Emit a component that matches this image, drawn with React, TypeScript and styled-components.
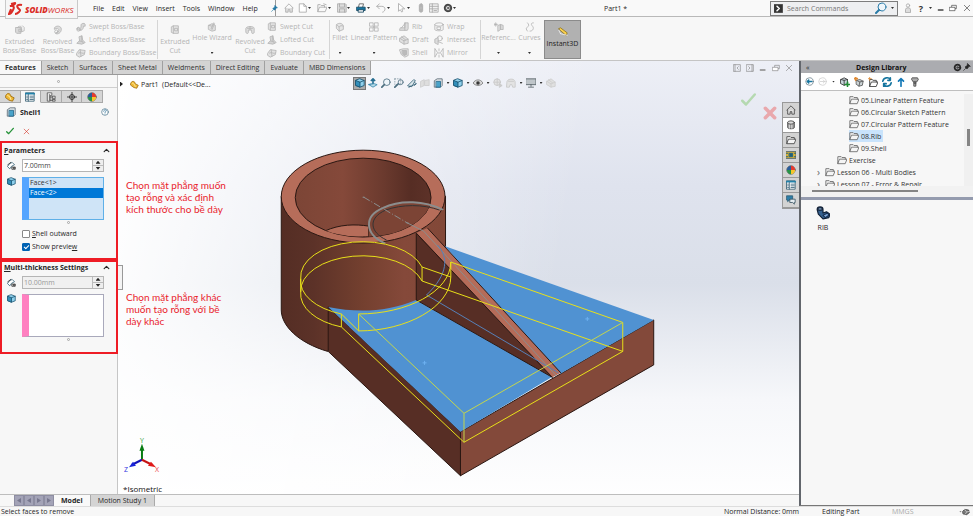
import React from "react";
import styled, { createGlobalStyle, css } from "styled-components";

const Global = createGlobalStyle`
  *, *::before, *::after { box-sizing: border-box; }
  html, body, #root { margin: 0; height: 100%; }
  body {
    font-family: "Open Sans", "Noto Sans", sans-serif;
    font-size: 7px;
    line-height: 9px;
    color: #262626;
    background: #f7f7f7;
    overflow: hidden;
  }
  button, input { font: inherit; color: inherit; margin: 0; padding: 0; border: 0; background: none; }
  ul { list-style: none; margin: 0; padding: 0; }
`;

const Page = styled.div`
  display: flex;
  flex-direction: column;
  min-height: 100vh;
`;

/* ---------- icons ---------- */

const Glyph = styled.svg<{ $size?: number }>`
  display: block;
  flex: none;
  width: ${(p) => p.$size ?? 10}px;
  height: ${(p) => p.$size ?? 10}px;
  fill: none;
  stroke: currentColor;
  stroke-width: 1;
  stroke-linejoin: round;
  stroke-linecap: round;
`;

type IconProps = { name: string; size?: number };

const shapes: Record<string, React.ReactNode> = {
  extrude: <><path d="M1 3h6v7H2L1 9z" fill="#d9d9d9" /><path d="M3 3c0-2 5-2 5 0v5l3-1V3L9 1M5 5h3v3H5z" /></>,
  revolve: <><path d="M2 3c2-3 8-2 8 2s-4 7-7 5l4-3c1-2-2-4-5-2z" fill="#dcdcdc" /><circle cx="4" cy="8" r="2" /></>,
  sweep: <><path d="M1 8c0-2 3-2 3-1s2 1 2-1V4c0-3 5-3 5-1v2H9c0 4-3 6-5 5z" fill="#d9d9d9" /><circle cx="3" cy="9" r="2" /></>,
  loft: <><path d="M4 2l3-1 1 5 3 3-4 2-6-1 3-3z" fill="#d4d4d4" /><path d="M7 1v6l2 3M4 7l3 1" /></>,
  boundary: <><path d="M1 6l3-4 7 1-1 5-6 3-3-2z" fill="#e2e2e2" /><path d="M3 6c3-2 5 2 7 0M5 2l1 8" /></>,
  cut: <><path d="M2 2l2-1h6v9H4L2 9z" fill="#e6e6e6" /><path d="M4 1v9M6 4h3v3H6z" /></>,
  hole: <><path d="M2 4l4-2 4 2v6l-4 1-4-2z" fill="#e0e0e0" /><path d="M8 1L5 8M9 2L6 9M2 4l4 1" /></>,
  revcut: <><path d="M1 4c0-3 10-3 10 0v5c0 1-3 2-3 0V6H4v3c0 2-3 1-3 0z" fill="#e0e0e0" /><path d="M3 4h6M6 2v4" /></>,
  fillet: <><path d="M2 3c3-3 8-1 8 2v4l-5 2-3-3z" fill="#e6e6e6" /><path d="M2 3l3 3v5M5 6c1-2 3-2 5-1" /></>,
  pattern: <><rect x="1" y="1" width="4" height="4" /><rect x="7" y="1" width="4" height="4" /><rect x="1" y="7" width="4" height="4" /><rect x="7" y="7" width="4" height="4" /><path d="M5 5l2 2M7 5L5 7" /></>,
  rib: <><path d="M1 10h9l1-2V1H7v6H2z" fill="#dedede" /><path d="M7 1v9M3 7l4-5" /></>,
  draft: <><path d="M1 4l5-3 5 4v5l-5 1-5-3z" fill="#e0e0e0" /><path d="M1 4l5 3v4M6 7l5-2M3 2l5 4" /></>,
  shell: <><path d="M1 2l4-1h6v8l-4 2-4-3z" fill="#e4e4e4" /><path d="M4 3h5v5l-3 1-2-2z" fill="#bbb" /></>,
  wrap: <><ellipse cx="6" cy="3" rx="5" ry="2" /><path d="M1 3v6c0 2 10 2 10 0V3M4 6h4v3H4z" /></>,
  intersect: <><circle cx="7" cy="4" r="3" /><path d="M1 9V5l4-2v8zM5 8l5 2" fill="#dcdcdc" /></>,
  mirror: <><path d="M1 1v10l3-5zM11 1v10L8 6zM6 1v2M6 5v2M6 9v2" /></>,
  reference: <><path d="M5 4l3-1v6l-3 2zM8 3l3 1v5L8 9z" fill="#ddd" /><path d="M2 1v4M0 3h4M1 2l2 2M3 2L1 4" /></>,
  curves: <path d="M3 1c2 2 2 4 0 5s-2 3 0 5M10 1C7 1 7 3 9 5s1 6-3 6" />,
  instant: <><path d="M1 2l2-1 8 6-1 3z" fill="#ffd34a" stroke="#8d7420" /><path d="M3 8l8 2M1 4l2 4" stroke="#eee" /></>,
  home: <><path d="M1 6l5-5 5 5" /><path d="M2 6v5h3V8h2v3h3V6" fill="#e1e1e1" /></>,
  file: <path d="M2 1h5l3 3v7H2zM7 1v3h3" fill="#fff" />,
  open: <path d="M1 10V2h3l1 1h4v2M1 10l2-5h9l-2 5zM8 1l3 1" />,
  save: <><path d="M1 1h9l1 1v9H1z" fill="#ddd" /><path d="M3 1v4h6V1M3 11V7h6v4" /></>,
  print: <><path d="M3 5l1-4h5l-1 4" fill="#fff" stroke="#555" /><path d="M1 5h10v4H1z" fill="#16759f" stroke="#174964" /><path d="M3 8h6v3H3z" fill="#eee" stroke="#174964" /></>,
  undo: <path d="M4 1L1 4l3 3M1 4h6c5 0 5 6 1 7" />,
  cursor: <path d="M3 1v9l2-2 2 3 1-1-1-3h3z" fill="#fff" />,
  traffic: <><rect x="4" y="1" width="4" height="10" rx="2" fill="#b9b9b9" /><path d="M6 3v1M6 8v1" /></>,
  list: <><rect x="1" y="1" width="10" height="10" fill="#f1f1f1" /><path d="M4 1v10M1 4h10M1 7h10M6 9h3" /></>,
  gear: <><circle cx="6" cy="6" r="4" strokeWidth="2" strokeDasharray="2 1" /><circle cx="6" cy="6" r="3" /><circle cx="6" cy="6" r="1" /></>,
  pin: <path d="M7 1l4 4-2 0-2 3-1 1-3-3 3-2zM4 8l-3 3" fill="currentColor" />,
  search: <><circle cx="7" cy="5" r="4" fill="#eef5fa" /><path d="M4 8l-3 3" strokeWidth="2" /></>,
  command: <><rect width="12" height="12" fill="#343434" stroke="#888" /><path d="M4 3l3 3-3 3" stroke="#fff" strokeWidth="2" /></>,
  user: <><circle cx="6" cy="3" r="2" /><path d="M3 11V8c0-3 6-3 6 0v3z" fill="#ddd" /></>,
  minimise: <path d="M2 9h7" strokeWidth="2" />,
  restore: <><path d="M4 4V2h7v5H9" /><path d="M1 5h8v5H1z" fill="#fff" /></>,
  close: <path d="M2 2l8 8M10 2l-8 8" />,
  paneLeft: <path d="M1 1h10v10H1zM3 1v10M8 4L6 6l2 2" />,
  paneRight: <path d="M1 1h10v10H1zM9 1v10M4 4l2 2-2 2" />,
  check: <path d="M1 7l3 3 7-8" strokeWidth="2" />,
  cube: <><path d="M6 1l5 2v6l-5 2-5-2V3z" fill="#8fd0ec" stroke="#17506d" /><path d="M1 3l5 2v6l-5-2z" fill="#328fba" stroke="#17506d" /><path d="M6 5l5-2" stroke="#17506d" /></>,
  sheetCube: <><path d="M2 3l3-2h6v8l-2 2H2z" fill="#e6e9ea" stroke="#586874" /><path d="M4 4h5v7H4z" fill="#49a3ca" stroke="#24688a" /></>,
  feature: <><path d="M1 4c2-4 6-2 6 1l4 2-2 4-4-1-4-3z" fill="#efb935" stroke="#9c6a0b" /><path d="M3 4l3 2 1 3" stroke="#fff1b0" /></>,
  property: <><path d="M1 1h10v10H1z" fill="#fff" stroke="#315c70" /><path d="M1 2h10" stroke="#2281a9" strokeWidth="2" /><path d="M4 3v8M6 5h4M6 7h4M6 9h4M2 5h1M2 7h1M2 9h1" stroke="#386277" /></>,
  config: <><path d="M2 1h5v3H5v7H2z" fill="#fff" stroke="#555" /><path d="M4 3v7M5 6h3M5 10h3M8 5h3v3H8zM8 9h3v2H8z" stroke="#555" /></>,
  target: <><circle cx="6" cy="6" r="3" /><path d="M6 0v12M0 6h12" /></>,
  appearance: <><circle cx="6" cy="6" r="5" fill="#fff" stroke="#555" /><path d="M6 6V1a5 5 0 015 5z" fill="#e63b2e" stroke="none" /><path d="M6 6h5a5 5 0 01-5 5z" fill="#f5c52b" stroke="none" /><path d="M6 6v5a5 5 0 01-5-5z" fill="#269447" stroke="none" /><path d="M6 6H1a5 5 0 015-5z" fill="#2b5d9a" stroke="none" /></>,
  help: <><circle cx="6" cy="6" r="5" fill="#fff" stroke="#426e87" /><path d="M4 5c0-3 4-3 4-1 0 1-2 1-2 3M6 9h0" stroke="#17608b" /></>,
  depth: <><path d="M1 7l3-4 3-1 3 3-4 2-2 3z" fill="#fff" stroke="#28576d" /><path d="M1 5l4-3M7 8h2v3H7zM10 8h1v3h-1z" stroke="#222" /></>,
  normal: <><path d="M6 1v7M4 3l2-2 2 2" stroke="#286e91" strokeWidth="2" /><path d="M1 8l3-1M8 7l3 1-5 3-5-3z" stroke="#3a89ad" fill="#b9dbe8" /></>,
  zoomArea: <><path d="M1 1h7v7H1z" stroke="#8fa1ac" strokeDasharray="1 2" /><circle cx="8" cy="5" r="3" /><path d="M5 7l-4 4" strokeWidth="2" /></>,
  prev: <><path d="M1 9l7-7 2 1-4 7zM4 10l-2 1 9-4M9 5l2 2-2 2" stroke="#396579" fill="#dbe7ec" /></>,
  section: <path d="M1 4l4-2v7l-4 2zM6 3l5-1v7L6 9z" fill="#dedede" />,
  eye: <><path d="M0 6c3-5 9-5 12 0-3 4-9 4-12 0z" fill="#ddd" /><circle cx="6" cy="6" r="2" fill="#333" /></>,
  ball: <><circle cx="5" cy="5" r="4" fill="#e3e3e3" /><path d="M5 1v8M1 5h8M8 7l3 2-3 2z" fill="#ccc" /></>,
  scene: <path d="M1 5c0-5 10-5 10 0v6H8l-1-3H5l-1 3H1zM3 4h6" fill="#e3e3e3" />,
  monitor: <><path d="M0 1h12v7H0z" fill="#bfc5c9" stroke="#505b62" /><path d="M6 8v2M3 11h6" stroke="#505b62" /></>,
  cylinder: <><path d="M2 3v6c0 2 8 2 8 0V3" fill="#999" stroke="#444" /><ellipse cx="6" cy="3" rx="4" ry="2" fill="#ddd" stroke="#444" /><path d="M4 6v4M7 6v4" stroke="#eee" /></>,
  folder: <path d="M1 10V2h4l1 1h4v2M1 10l2-5h9l-2 5z" fill="#f4f4f4" />,
  view: <><path d="M0 2h12v8H0z" fill="#ddb53a" stroke="#3f5662" /><path d="M4 4h4v4H4zM0 4h2M0 8h2M10 4h2M10 8h2" fill="#1e607d" stroke="#1e607d" /></>,
  chat: <><path d="M1 1h7v5H4L2 8V6H1z" fill="#2e7fa8" stroke="#2e5c74" /><path d="M5 5h6v4h-1v2L8 9H5z" fill="#e5edf1" stroke="#3c5664" /></>,
  back: <><circle cx="6" cy="6" r="5" fill="#fff" stroke="#637a86" /><path d="M9 6H3M5 4L3 6l2 2" stroke="#16759f" strokeWidth="2" /></>,
  forward: <><circle cx="6" cy="6" r="5" /><path d="M3 6h6M7 4l2 2-2 2" /></>,
  addLib: <><path d="M1 3l4-2 4 2v5l-4 2-4-2z" fill="#c8d5db" stroke="#333" /><path d="M1 3l4 1v6M5 4l4-1" stroke="#333" /><path d="M9 6v5M6 9h6" stroke="#238b35" strokeWidth="2" /></>,
  box: <><path d="M3 4l4-1 4 2-1 5-4 1-3-2z" fill="#cbd3d6" stroke="#555" /><path d="M3 4l4 2 4-1M7 6l-1 5" stroke="#555" /><path d="M2 0v4M0 2h4" stroke="#df8a35" strokeWidth="2" /></>,
  newFolder: <><path d="M2 11V3h3l1 1h4v2M2 11l2-5h8l-2 5z" fill="#fff" stroke="#333" /><path d="M2 0v4M0 2h4" stroke="#df8a35" /></>,
  refresh: <><path d="M1 5c1-5 7-5 9-2V1M10 1v3H7M11 7c-1 5-7 5-9 2v2M2 11V8h3" stroke="#16759f" strokeWidth="2" /></>,
  up: <path d="M6 11V2M3 5l3-3 3 3" stroke="#1479b8" strokeWidth="2" />,
  bolt: <path d="M3 1h6l1 2-2 3H4L2 3zM5 6h2v5H5zM5 8h2" fill="#aaa" stroke="#444" />,
  ribPart: <><path d="M1 3c0-3 5-3 5 0v3l3-1 3 2-1 3-5 1-4-4z" fill="#35618f" stroke="#101f35" /><ellipse cx="3.5" cy="2.5" rx="2" ry="1" fill="#93b4d9" stroke="#101f35" /><path d="M6 8l4-2 1 2-3 2z" fill="#82aadd" stroke="#173152" /></>,
  globe: <><path d="M1 5l3-3 6 1 1 4-4 3-5-1z" fill="#777" stroke="#333" /><path d="M4 2l3 4 4-1M7 6l-2 3" stroke="#ddd" /></>,
};

const Icon = ({ name, size }: IconProps) => (
  <Glyph viewBox="0 0 12 12" $size={size} aria-hidden="true">{shapes[name]}</Glyph>
);

const IconButton = styled.button<{ $w?: number; $tone?: string }>`
  display: flex;
  align-items: center;
  justify-content: center;
  flex: none;
  width: ${(p) => p.$w ?? 13}px;
  color: ${(p) => p.$tone ?? "#a8a8a8"};
`;

const Caret = styled.span<{ $dark?: boolean }>`
  flex: none;
  width: 3px;
  height: 2px;
  background: ${(p) => (p.$dark ? "#333" : "#8c8c8c")};
  clip-path: polygon(0 0, 100% 0, 50% 100%);
`;

/* ---------- title bar ---------- */

const TitleBar = styled.header`
  display: flex;
  align-items: center;
  height: 17px;
  border-bottom: 1px solid #b9b9b9;
  background: #f9f9f9;
`;

const Brand = styled.div`
  position: relative;
  z-index: 1;
  display: flex;
  align-items: center;
  gap: 2px;
  align-self: flex-start;
  flex: none;
  width: 73px;
  height: 19px;
  margin-left: 5px;
  padding: 0 2px;
  border: 1px solid #c9c9c9;
  border-top: 0;
  background: #f6f6f6;
  color: #da2c26;
  font-size: 8px;
  font-style: italic;
  b { font-weight: 800; }
`;

const BrandMark = styled.svg`
  width: 15px;
  height: 14px;
  fill: none;
  stroke: currentColor;
  stroke-width: 2;
`;

const MenuBar = styled.nav`
  display: flex;
  flex: none;
  gap: 8px;
  align-items: center;
  width: 198px;
  height: 16px;
  padding-left: 15px;
  border-right: 1px solid #999;
  font-size: 7px;
`;

const PinSlot = styled.span`
  margin-left: 5px;
  color: #2378a5;
`;

const QuickTools = styled.div`
  display: flex;
  align-items: center;
  padding-left: 7px;
`;

const QuickSlot = styled.span<{ $w: number }>`
  display: flex;
  align-items: center;
  justify-content: space-between;
  width: ${(p) => p.$w}px;
  padding-right: 5px;
`;

const DocTitle = styled.h1`
  flex: 1;
  margin: 0;
  padding-right: 0;
  text-align: center;
  font-size: 7px;
  font-weight: 400;
`;

const SearchBox = styled.label`
  display: flex;
  align-items: center;
  gap: 4px;
  flex: none;
  width: 128px;
  height: 15px;
  padding: 0 3px;
  border: 1px solid #7d7d7d;
  background: #eeeff1;
  color: #2a7ca8;
  input { flex: 1; min-width: 0; height: 11px; color: #555; outline: 0; }
  input::placeholder { color: #777; opacity: 1; }
`;

const WindowTools = styled.div`
  display: flex;
  align-items: center;
  flex: none;
  font-weight: 700;
  font-size: 9px;
`;

/* ---------- ribbon ---------- */

const Ribbon = styled.div`
  display: flex;
  align-items: stretch;
  height: 44px;
  padding: 3px 0 1px;
  border-bottom: 1px solid #c4c4c4;
  color: #b5b5b5;
`;

const BigTool = styled.button<{ $w: number; $active?: boolean }>`
  display: flex;
  flex-direction: column;
  align-items: center;
  justify-content: flex-start;
  flex: none;
  width: ${(p) => p.$w}px;
  padding-top: ${(p) => (p.$active ? 6 : 5)}px;
  gap: 2px;
  white-space: nowrap;
  ${(p) => p.$active && css`
    border: 1px solid #8b8b8b;
    background: #b1b1b1;
    color: #222;
  `}
`;

const DropTool = styled(BigTool)`
  padding-top: 2px;
  gap: 1px;
  ${Caret} { margin-top: 9px; }
`;

const ToolColumn = styled.div<{ $w: number }>`
  display: grid;
  grid-template-rows: repeat(3, 13px);
  flex: none;
  width: ${(p) => p.$w}px;
`;

const SmallTool = styled.button`
  display: flex;
  align-items: center;
  gap: 3px;
  white-space: nowrap;
`;

const Divider = styled.span`
  flex: none;
  width: 1px;
  margin-right: 1px;
  background: #d5d5d5;
`;

/* ---------- workspace ---------- */

const Body = styled.div`
  display: flex;
  flex: 1;
  min-height: 0;
`;

const Work = styled.main`
  display: flex;
  flex: 1;
  flex-direction: column;
  min-width: 0;
  background:
    linear-gradient(100deg, #fff 14%, rgba(255, 255, 255, 0) 68%),
    linear-gradient(180deg, #edeff6 0%, #dfe3ee 28%, #dadfe9 50%, #f6f7fa 76%, #fff 100%);
`;

const TabRow = styled.div`
  display: flex;
  align-items: stretch;
  justify-content: space-between;
  height: 14px;
`;

const Tabs = styled.nav`
  display: flex;
  border-bottom: 1px solid #999;
`;

const Tab = styled.button<{ $on?: boolean }>`
  padding: 0 5px;
  border-right: 1px solid #a0a0a0;
  background: ${(p) => (p.$on ? "#f7f7f7" : "#d3d3d3")};
  color: #303030;
  font-weight: ${(p) => (p.$on ? 700 : 400)};
  white-space: nowrap;
`;

const DocTools = styled.div`
  display: flex;
  padding-right: 4px;
`;

const Split = styled.div`
  display: flex;
  flex: 1;
  min-height: 0;
`;

/* ---------- property manager ---------- */

const Panel = styled.aside`
  display: flex;
  flex-direction: column;
  flex: none;
  width: 118px;
  border-right: 1px solid #c6c6c6;
  background: #f7f7f7;
`;

const Grip = styled.div`
  display: grid;
  place-items: center;
  height: 13px;
  margin-bottom: 2px;
  border-bottom: 1px solid #cfcfcf;
`;

const Dot = styled.i`
  display: block;
  width: 3px;
  height: 3px;
  border: 1px solid #a5a5a5;
  border-radius: 50%;
`;

const PanelTabs = styled.div`
  display: grid;
  grid-template-columns: repeat(5, 1fr);
  height: 13px;
  margin-right: 14px;
`;

const PanelTab = styled.button<{ $on?: boolean }>`
  display: grid;
  place-items: center;
  border: 1px solid #a9a9a9;
  border-left: 0;
  border-bottom-color: ${(p) => (p.$on ? "#f7f7f7" : "#a9a9a9")};
  background: ${(p) => (p.$on ? "#f7f7f7" : "#d5d5d5")};
`;

const FeatureTitle = styled.div`
  display: flex;
  align-items: center;
  gap: 4px;
  height: 18px;
  padding: 0 8px 0 6px;
  h2 { flex: 1; margin: 0; font-size: 7px; }
`;

const Actions = styled.div`
  display: flex;
  gap: 4px;
  height: 20px;
  padding: 0 3px;
`;

const Section = styled.section<{ $tall?: boolean }>`
  height: ${(p) => (p.$tall ? 119 : 94)}px;
  margin-right: -1px;
  border: 2px solid #ee1c25;
  padding: ${(p) => (p.$tall ? 2 : 0)}px 2px 0;
`;

const SectionHead = styled.h3`
  display: flex;
  align-items: center;
  justify-content: space-between;
  margin: 0;
  height: 11px;
  padding-right: 4px;
  font-size: 7px;
  white-space: nowrap;
`;

const FieldRow = styled.div`
  display: grid;
  grid-template-columns: 18px 82px;
  align-items: start;
  padding-top: 3px;
  > svg { margin: 2px 0 0 3px; }
`;

const Spin = styled.div<{ $off?: boolean }>`
  display: flex;
  height: 13px;
  border: 1px solid #b5b5b5;
  background: ${(p) => (p.$off ? "#f0f0f0" : "#fff")};
  color: ${(p) => (p.$off ? "#999" : "#444")};
  input { flex: 1; min-width: 0; padding-left: 1px; }
`;

const Steppers = styled.div`
  display: grid;
  width: 11px;
  grid-template-rows: 1fr 1fr;
  border-left: 1px solid #bbb;
`;

const Step = styled.button<{ $down?: boolean }>`
  display: grid;
  place-items: center;
  border-bottom: ${(p) => (p.$down ? 0 : 1)}px solid #bbb;
  background: #eee;
  &::after {
    content: "";
    width: 5px;
    height: 3px;
    background: #222;
    clip-path: ${(p) => (p.$down ? "polygon(0 0, 100% 0, 50% 100%)" : "polygon(50% 0, 100% 100%, 0 100%)")};
  }
`;

const FaceList = styled.ul<{ $tone: string; $filled?: boolean }>`
  height: 43px;
  margin-top: 2px;
  border: 1px solid ${(p) => (p.$filled ? "#5fb0e8" : "#a9a9bb")};
  border-left: 7px solid ${(p) => p.$tone};
  background: ${(p) => (p.$filled ? "#cfe4f7" : "#fff")};
`;

const Face = styled.li<{ $on?: boolean }>`
  height: 10px;
  padding-left: 1px;
  background: ${(p) => (p.$on ? "#0078d7" : "transparent")};
  color: ${(p) => (p.$on ? "#fff" : "#333")};
`;

const ListGrip = styled(Dot)`
  margin: 1px auto 0 63px;
`;

const Check = styled.label`
  display: flex;
  align-items: center;
  gap: 2px;
  height: 13px;
  padding-left: 18px;
  input {
    appearance: none;
    display: grid;
    place-items: center;
    width: 8px;
    height: 8px;
    border: 1px solid #888;
    border-radius: 1px;
    background: #fff;
  }
  input:checked { background: #0062b3; border-color: #0062b3; }
  input:checked::after {
    content: "";
    width: 5px;
    height: 3px;
    border: solid #fff;
    border-width: 0 0 1px 1px;
    transform: rotate(-45deg);
  }
`;

const Checks = styled.div`
  padding-top: 3px;
`;

/* ---------- viewport ---------- */

const Viewport = styled.div`
  position: relative;
  flex: 1;
  min-width: 0;
`;

const Model = styled.svg`
  position: absolute;
  inset: 0;
  width: 100%;
  height: 100%;
`;

const HeadsUp = styled.div`
  position: relative;
  display: flex;
  align-items: center;
  height: 16px;
`;

const Crumb = styled.div`
  display: flex;
  align-items: center;
  gap: 2px;
  flex: none;
  width: 235px;
  padding: 2px 0 0 2px;
  white-space: pre;
`;

const Arrow = styled.i`
  width: 3px;
  height: 5px;
  margin-right: 5px;
  background: #222;
  clip-path: polygon(0 0, 100% 50%, 0 100%);
`;

const ActiveTool = styled(IconButton)`
  width: 13px;
  height: 13px;
  border: 1px solid #777;
  background: #aaa;
`;

const Note = styled.p<{ $top: number }>`
  position: absolute;
  left: 8px;
  top: ${(p) => p.$top}px;
  width: 106px;
  margin: 0;
  color: #e9232c;
  font: 10px/12px Lato, "Open Sans", sans-serif;
`;

const PanelHandle = styled.button`
  position: absolute;
  left: 0;
  top: 190px;
  width: 5px;
  height: 25px;
  border: 1px solid #999;
  border-left: 0;
  background: #f4f4f4;
  color: #666;
`;

const Confirm = styled.div`
  position: absolute;
  top: 16px;
  right: 22px;
  display: flex;
  gap: 7px;
  button:first-child { color: #b5d9b0; height: 16px; }
  button:last-child { color: #e9a8ac; margin-top: 15px; }
  svg { stroke-width: 3; }
`;

const TaskTabs = styled.nav`
  position: absolute;
  right: 0;
  top: 27px;
  width: 17px;
  border: 1px solid #999;
  border-right: 0;
`;

const TaskTab = styled.button<{ $on?: boolean }>`
  display: grid;
  place-items: center;
  width: 16px;
  height: 15px;
  border-bottom: 1px solid #999;
  background: ${(p) => (p.$on ? "#fff" : "#d3d3d3")};
  color: #444;
`;

const ViewName = styled.div`
  position: absolute;
  left: 5px;
  bottom: 1px;
  font-size: 8px;
  color: #111;
`;

/* ---------- bottom ---------- */

const StudyTabs = styled.div`
  display: flex;
  align-items: stretch;
  height: 12px;
  border-top: 1px solid #bdbdbd;
  background: #f7f7f7;
`;

const Navigator = styled.div`
  display: grid;
  grid-template-columns: repeat(4, 10px);
  margin-left: 14px;
  background: #a3a3b7;
`;

const NavButton = styled.button<{ $back?: boolean }>`
  display: grid;
  place-items: center;
  border: 1px solid #8d8da2;
  &::after {
    content: "";
    width: 4px;
    height: 5px;
    background: #77778e;
    clip-path: ${(p) => (p.$back ? "polygon(100% 0, 0 50%, 100% 100%)" : "polygon(0 0, 100% 50%, 0 100%)")};
  }
`;

const StudyTab = styled.button<{ $on?: boolean }>`
  padding: 0 7px;
  border-right: 1px solid #aaa;
  background: ${(p) => (p.$on ? "#f9f9f9" : "#d4d4d4")};
  font-weight: ${(p) => (p.$on ? 700 : 400)};
  white-space: nowrap;
`;

const StatusBar = styled.footer`
  display: flex;
  align-items: center;
  height: 10px;
  border-top: 1px solid #ddd;
  padding-left: 1px;
  background: #f7f7f7;
`;

const Hint = styled.span`
  flex: 1;
`;

const Status = styled.span<{ $w: number; $dim?: boolean }>`
  display: flex;
  align-items: center;
  justify-content: space-between;
  flex: none;
  width: ${(p) => p.$w}px;
  color: ${(p) => (p.$dim ? "#aaa" : "inherit")};
`;

/* ---------- design library ---------- */

const Library = styled.aside`
  display: flex;
  flex-direction: column;
  flex: none;
  width: 174px;
  border-left: 2px solid #62666c;
  border-bottom: 1px solid #777;
  background: #f7f7f7;
`;

const LibraryHead = styled.div`
  display: flex;
  align-items: center;
  gap: 1px;
  height: 12px;
  padding: 0 2px 0 5px;
  background: #abacb0;
  h2 { flex: 1; margin: 0; text-align: center; font-size: 7px; color: #111; }
`;

const LibraryTools = styled.div`
  display: flex;
  align-items: center;
  height: 18px;
  padding-left: 2px;
  border-bottom: 1px solid #bfbfbf;
  background: #fff;
`;

const TreeFrame = styled.div`
  display: flex;
  height: 95px;
  padding-top: 3px;
`;

const Tree = styled.ul`
  flex: 1;
  min-width: 0;
  overflow: hidden;
`;

const TreeRow = styled.li<{ $level: number }>`
  display: flex;
  align-items: center;
  height: 12px;
  padding-left: ${(p) => 16 + p.$level * 12}px;
  color: #777;
`;

const Expander = styled.span`
  width: 8px;
  color: #666;
  font-size: 10px;
`;

const TreeItem = styled.button<{ $on?: boolean }>`
  display: flex;
  align-items: center;
  gap: 2px;
  height: 12px;
  padding-right: 2px;
  background: ${(p) => (p.$on ? "#c9e3fb" : "transparent")};
  white-space: nowrap;
  svg { color: #666; }
  span { color: #333; }
`;

const VScroll = styled.div`
  width: 9px;
  padding: 35px 3px 0;
  background: #f0f0f0;
  &::after { content: ""; display: block; height: 17px; background: #858585; }
`;

const HScroll = styled.div`
  height: 11px;
  padding: 4px 55px 0 11px;
  background: #f2f2f2;
  &::after { content: ""; display: block; height: 2px; background: #858585; }
`;

const PaneSplit = styled.div`
  height: 3px;
  background: #949bae;
`;

const PartTile = styled.button`
  display: flex;
  flex-direction: column;
  align-items: center;
  gap: 3px;
  width: 44px;
  padding-top: 6px;
`;

/* ---------- data ---------- */

const quick: [string, string, number, boolean?][] = [
  ["Home", "home", 14], ["New", "file", 19, true], ["Open", "open", 20, true], ["Save", "save", 19, true],
  ["Print", "print", 20, true], ["Undo", "undo", 20, true], ["Select", "cursor", 20, true],
  ["Rebuild", "traffic", 13], ["File properties", "list", 14], ["Options", "gear", 19, true],
];

const ribbonTabs = ["Features", "Sketch", "Surfaces", "Sheet Metal", "Weldments", "Direct Editing", "Evaluate", "MBD Dimensions"];

const folders: { name: string; level: number; branch?: boolean; on?: boolean }[] = [
  { name: "05.Linear Pattern Feature", level: 2 },
  { name: "06.Circular Sketch Pattern", level: 2 },
  { name: "07.Circular Pattern Feature", level: 2 },
  { name: "08.Rib", level: 2, on: true },
  { name: "09.Shell", level: 2 },
  { name: "Exercise", level: 1 },
  { name: "Lesson 06 - Multi Bodies", level: 0, branch: true },
  { name: "Lesson 07 - Error & Repair", level: 0, branch: true },
];

const viewTools: [string, string, number, string?, boolean?][] = [
  ["Normal to", "normal", 13], ["Zoom to fit", "search", 13, "#4d6f80"], ["Zoom to area", "zoomArea", 13, "#4d6f80"],
  ["Previous view", "prev", 13], ["Section view", "section", 13, "#ccc"], ["View orientation", "sheetCube", 20, "#333", true],
  ["Display style", "cube", 20, "#333", true], ["Hide or show items", "eye", 20, "#777", true],
  ["Edit appearance", "ball", 13, "#c8c8c8"], ["Apply scene", "scene", 20, "#c8c8c8", true],
  ["View settings", "monitor", 20, "#555", true], ["Render", "draft", 13, "#ccc"],
];

const column = (items: [string, string][], w: number) => (
  <ToolColumn $w={w}>
    {items.map(([icon, label]) => (
      <SmallTool key={label}><Icon name={icon} />{label}</SmallTool>
    ))}
  </ToolColumn>
);

const PartModel = () => (
  <Model viewBox="118 75 682 419" preserveAspectRatio="xMidYMid meet" role="img" aria-label="Bracket with rib and shell preview">
    <defs>
      <linearGradient id="outer" x1="281" x2="446" y1="0" y2="0" gradientUnits="userSpaceOnUse">
        <stop offset="0" stopColor="#542d24" />
        <stop offset=".2" stopColor="#5c3228" />
        <stop offset=".5" stopColor="#74402f" />
        <stop offset=".75" stopColor="#85493a" />
        <stop offset="1" stopColor="#824838" />
      </linearGradient>
      <linearGradient id="inner" x1="295" x2="432" y1="0" y2="0" gradientUnits="userSpaceOnUse">
        <stop offset="0" stopColor="#7c4536" />
        <stop offset=".35" stopColor="#85493a" />
        <stop offset=".65" stopColor="#6b3a2e" />
        <stop offset=".85" stopColor="#562d24" />
        <stop offset="1" stopColor="#5d3228" />
      </linearGradient>
      <clipPath id="bore"><ellipse cx="363.5" cy="197.5" rx="68" ry="39.5" /></clipPath>
    </defs>
    <g stroke="#2a1712" strokeWidth="1" strokeLinejoin="round">
      <path d="M281.5 196V310C281.5 326 299 343 328 351.5L340 330L417 301L446 262V196Z" fill="url(#outer)" />
      <path d="M328.5 307L461 432V476L328.5 351.5Z" fill="#572e25" />
      <path d="M461 432L654.5 320V365L461 476Z" fill="#83493a" />
      <ellipse cx="363.5" cy="196.5" rx="82" ry="46.5" fill="#b66d5a" />
      <ellipse cx="363.5" cy="197.5" rx="68" ry="39.5" fill="url(#inner)" />
    </g>
    <g clipPath="url(#bore)" stroke="#2a1712">
      <path d="M325 231C340 224 356 224 369 226V240H325Z" fill="#b66d5a" />
      <path d="M369 240V222C369 211 390 202 408 202C420 202 432 203 440 206V250H369Z" fill="#7c4435" stroke="none" />
      <path d="M333 234C350 238 362 237 369 236.500" fill="none" />
    </g>
    <path d="M328.500 307C358 313 388 312 416.500 300L553 377L461 432Z" fill="#5092d2" />
    <path d="M445 246L654.500 320L561 374Z" fill="#5092d2" />
    <path d="M416.700 233V300L553 377.500Z" fill="#572e25" stroke="#2a1712" />
    <path d="M416.700 233L428 228L561.500 373L553 377.500Z" fill="#b56c59" />
    <path d="M416.700 233L553 377.500M428 228L561.500 373" fill="none" stroke="#2a1712" />
    <g fill="none" stroke="#8b8d8d">
      <path d="M385 243C365 234 364 216 383 208C402 199 425 201 443 209.500" strokeWidth="2" />
      <path d="M387 240C370 232 368 218 386 210C402 204 424 204 440 210" stroke="#333" />
      <path d="M364 197L408 223" strokeDasharray="7 2 1 2" />
      <path d="M408 223L424 231L557 376" />
      <path d="M364 196.500v1M408 222.500v1M385 242.500v1M443 209v1" strokeWidth="2" />
    </g>
    <path d="M438 245C449 257 449 274 427 295L559 373" fill="none" stroke="#5681b8" />
    <path d="M588 317v4M586 319h4M425 361v4M423 363h4" stroke="#6db2f1" />
    <g fill="none" stroke="#e8e019" strokeWidth="1">
      <path d="M341.700 314A62 35 0 0 1 301 278.500A62 35 0 0 1 422.500 267V281" />
      <path d="M341.700 327A62 35 0 0 1 301 292A62 35 0 0 1 422.500 281" />
      <path d="M341.700 327V314L359 331V314" />
      <path d="M359 314C407 314 451 292 451.300 262V277C451 307 407 331 359 331" />
      <path d="M301 278.500V292M422.500 267L451.300 277" />
      <path d="M422.500 281L623.500 351.500V322.500L451.300 262" />
      <path d="M623.500 351.500L464.500 442.500L341.700 327" />
      <path d="M623.500 322.500L464.500 413.500L359 314M464.500 413.500V442.500" stroke="#c4d64b" />
    </g>
    <g strokeWidth="2" fill="none">
      <path d="M142 460V448" stroke="#087b12" />
      <path d="M142 460L132 465" stroke="#1212b8" />
      <path d="M142 460L152 465" stroke="#c51313" />
    </g>
    <path d="M139.500 451L142 444L144.500 451Z" fill="#087b12" />
    <path d="M129 467.500L133 462L136 466Z" fill="#1722d8" />
    <path d="M156 467.500L148 466L151 462Z" fill="#e01919" />
    <g fontSize="7" fontFamily="Open Sans, sans-serif">
      <text x="140" y="443" fill="#2b9c36">Y</text>
      <text x="124" y="472" fill="#3035e0">Z</text>
      <text x="155" y="472" fill="#ed4141">X</text>
    </g>
  </Model>
);

export default function App() {
  return (
    <Page>
      <Global />
      <TitleBar>
        <Brand>
          <BrandMark viewBox="0 0 15 14" aria-hidden="true">
            <path d="M3 2l4-1c1 1-3 3-5 3 3-1 5 1 3 4-1 2-3 4-4 4l2-5M14 3c-4-1-6 1-4 3s3 2 1 4-4 2-4 2" />
          </BrandMark>
          <span><b>SOLID</b>WORKS</span>
        </Brand>
        <MenuBar>
          {["File", "Edit", "View", "Insert", "Tools", "Window", "Help"].map((m) => <button key={m}>{m}</button>)}
          <PinSlot><Icon name="pin" size={7} /></PinSlot>
        </MenuBar>
        <QuickTools>
          {quick.map(([label, icon, w, drop]) => (
            <QuickSlot key={label} $w={w}>
              <IconButton aria-label={label} $w={11} $tone={icon === "gear" ? "#444" : undefined}><Icon name={icon} /></IconButton>
              {drop && <Caret $dark />}
            </QuickSlot>
          ))}
        </QuickTools>
        <DocTitle>Part1 *</DocTitle>
        <SearchBox>
          <Icon name="command" size={9} />
          <input aria-label="Search Commands" placeholder="Search Commands" />
          <Icon name="search" size={12} />
          <Caret $dark />
        </SearchBox>
        <WindowTools>
          <IconButton aria-label="Account" $w={19}><Icon name="user" /></IconButton>
          <IconButton aria-label="Help" $w={8} $tone="#333">?</IconButton>
          <IconButton aria-label="Help menu" $w={11}><Caret $dark /></IconButton>
          <IconButton aria-label="Minimise" $w={10} $tone="#444"><Icon name="minimise" size={8} /></IconButton>
          <IconButton aria-label="Restore" $w={14} $tone="#444"><Icon name="restore" size={8} /></IconButton>
          <IconButton aria-label="Close" $w={13} $tone="#444"><Icon name="close" size={8} /></IconButton>
        </WindowTools>
      </TitleBar>

      <Ribbon>
        <BigTool $w={39}><Icon name="extrude" />Extruded<br />Boss/Base</BigTool>
        <BigTool $w={37}><Icon name="revolve" />Revolved<br />Boss/Base</BigTool>
        {column([["sweep", "Swept Boss/Base"], ["loft", "Lofted Boss/Base"], ["boundary", "Boundary Boss/Base"]], 81)}
        <Divider />
        <BigTool $w={32}><Icon name="cut" />Extruded<br />Cut</BigTool>
        <DropTool $w={42}><Icon name="hole" />Hole Wizard<Caret $dark /></DropTool>
        <BigTool $w={34}><Icon name="revcut" />Revolved<br />Cut</BigTool>
        {column([["cut", "Swept Cut"], ["loft", "Lofted Cut"], ["boundary", "Boundary Cut"]], 62)}
        <Divider />
        <DropTool $w={18}><Icon name="fillet" />Fillet<Caret $dark /></DropTool>
        <DropTool $w={50}><Icon name="pattern" />Linear Pattern<Caret $dark /></DropTool>
        {column([["rib", "Rib"], ["draft", "Draft"], ["shell", "Shell"]], 35)}
        {column([["wrap", "Wrap"], ["intersect", "Intersect"], ["mirror", "Mirror"]], 46)}
        <Divider />
        <DropTool $w={33}><Icon name="reference" />Referenc...<Caret $dark /></DropTool>
        <DropTool $w={29}><Icon name="curves" />Curves<Caret $dark /></DropTool>
        <BigTool $w={37} $active><Icon name="instant" />Instant3D</BigTool>
      </Ribbon>

      <Body>
        <Work>
          <TabRow>
            <Tabs>{ribbonTabs.map((t, i) => <Tab key={t} $on={i === 0}>{t}</Tab>)}</Tabs>
            <DocTools>
              {["paneLeft", "paneRight", "minimise", "restore", "close"].map((n) => (
                <IconButton key={n} aria-label={n} $tone="#888"><Icon name={n} size={8} /></IconButton>
              ))}
            </DocTools>
          </TabRow>
          <Split>
            <Panel>
              <Grip><Dot /></Grip>
              <PanelTabs>
                {["feature", "property", "config", "target", "appearance"].map((n, i) => (
                  <PanelTab key={n} aria-label={n} $on={i === 1}><Icon name={n} /></PanelTab>
                ))}
              </PanelTabs>
              <FeatureTitle><Icon name="sheetCube" /><h2>Shell1</h2><Icon name="help" size={8} /></FeatureTitle>
              <Actions>
                <IconButton aria-label="OK" $tone="#27933a"><Icon name="check" size={8} /></IconButton>
                <IconButton aria-label="Cancel" $tone="#d32a1b"><Icon name="close" size={7} /></IconButton>
              </Actions>
              <Section $tall>
                <SectionHead><span><u>P</u>arameters</span><Chevron /></SectionHead>
                <FieldRow>
                  <Icon name="depth" size={9} />
                  <Spin>
                    <input aria-label="Thickness" defaultValue="7.00mm" />
                    <Steppers><Step aria-label="Increase" /><Step $down aria-label="Decrease" /></Steppers>
                  </Spin>
                </FieldRow>
                <FieldRow>
                  <Icon name="cube" size={9} />
                  <FaceList $tone="#55a5ff" $filled role="listbox" aria-label="Faces to remove">
                    <Face role="option" aria-selected="false">Face&lt;1&gt;</Face>
                    <Face role="option" aria-selected="true" $on>Face&lt;2&gt;</Face>
                  </FaceList>
                </FieldRow>
                <ListGrip />
                <Checks>
                  <Check><input type="checkbox" /><span><u>S</u>hell outward</span></Check>
                  <Check><input type="checkbox" defaultChecked /><span>Show previe<u>w</u></span></Check>
                </Checks>
              </Section>
              <Section>
                <SectionHead><span><u>M</u>ulti-thickness Settings</span><Chevron /></SectionHead>
                <FieldRow>
                  <Icon name="depth" size={9} />
                  <Spin $off>
                    <input aria-label="Multi-thickness" defaultValue="10.00mm" disabled />
                    <Steppers><Step aria-label="Increase" /><Step $down aria-label="Decrease" /></Steppers>
                  </Spin>
                </FieldRow>
                <FieldRow>
                  <Icon name="cube" size={9} />
                  <FaceList $tone="#ff80c0" role="listbox" aria-label="Multi-thickness faces" />
                </FieldRow>
                <ListGrip />
              </Section>
            </Panel>

            <Viewport>
              <PartModel />
              <HeadsUp>
                <Crumb><Arrow /><Icon name="feature" size={9} />{"Part1  (Default<<De..."}</Crumb>
                <ActiveTool aria-label="Isometric"><Icon name="cube" /></ActiveTool>
                {viewTools.map(([label, icon, w, tone, drop]) => (
                  <IconButton key={label} aria-label={label} $w={w} $tone={tone}>
                    <Icon name={icon} />{drop && <CaretGap><Caret $dark /></CaretGap>}
                  </IconButton>
                ))}
              </HeadsUp>
              <Note $top={104}>Chọn mặt phẳng muốn tạo rỗng và xác định kích thước cho bề dày</Note>
              <Note $top={216}>Chọn mặt phẳng khác muốn tạo rỗng với bề dày khác</Note>
              <PanelHandle aria-label="Collapse panel" />
              <Confirm>
                <button aria-label="Accept"><Icon name="check" size={15} /></button>
                <button aria-label="Reject"><Icon name="close" size={14} /></button>
              </Confirm>
              <TaskTabs>
                {["home", "cylinder", "folder", "view", "appearance", "property", "chat"].map((n, i) => (
                  <TaskTab key={n} aria-label={n} $on={i === 1}><Icon name={n} /></TaskTab>
                ))}
              </TaskTabs>
              <ViewName>*Isometric</ViewName>
            </Viewport>
          </Split>
          <StudyTabs>
            <Navigator>
              <NavButton $back aria-label="First" /><NavButton $back aria-label="Previous" />
              <NavButton aria-label="Next" /><NavButton aria-label="Last" />
            </Navigator>
            <StudyTab $on>Model</StudyTab>
            <StudyTab>Motion Study 1</StudyTab>
          </StudyTabs>
        </Work>

        <Library>
          <LibraryHead>
            <span>«</span><h2>Design Library</h2><Icon name="gear" size={9} /><Icon name="pin" size={8} />
          </LibraryHead>
          <LibraryTools>
            <IconButton aria-label="Back"><Icon name="back" size={9} /></IconButton>
            <IconButton aria-label="Forward" $tone="#ccc"><Icon name="forward" size={9} /></IconButton>
            <IconButton aria-label="History" $w={9}><Caret $dark /></IconButton>
            {["addLib", "box", "newFolder", "refresh", "up", "bolt"].map((n) => (
              <IconButton key={n} aria-label={n} $w={14}><Icon name={n} /></IconButton>
            ))}
          </LibraryTools>
          <TreeFrame>
            <Tree>
              {folders.map((f) => (
                <TreeRow key={f.name} $level={f.level}>
                  <Expander>{f.branch ? "›" : ""}</Expander>
                  <TreeItem $on={f.on}><Icon name="folder" /><span>{f.name}</span></TreeItem>
                </TreeRow>
              ))}
            </Tree>
            <VScroll />
          </TreeFrame>
          <HScroll />
          <PaneSplit />
          <PartTile><Icon name="ribPart" size={14} />RIB</PartTile>
        </Library>
      </Body>

      <StatusBar>
        <Hint>Select faces to remove</Hint>
        <Status $w={98}>Normal Distance: 0mm</Status>
        <Status $w={70}>Editing Part</Status>
        <Status $w={70} $dim>MMGS<CaretGap><Caret /></CaretGap></Status>
        <Status $w={11}><Icon name="globe" size={8} /></Status>
      </StatusBar>
    </Page>
  );
}

const CaretGap = styled.span`
  display: flex;
  margin-left: 4px;
`;

const Chevron = () => (
  <Glyph viewBox="0 0 12 12" $size={7} aria-hidden="true"><path d="M2 8l4-4 4 4" strokeWidth="2" /></Glyph>
);
